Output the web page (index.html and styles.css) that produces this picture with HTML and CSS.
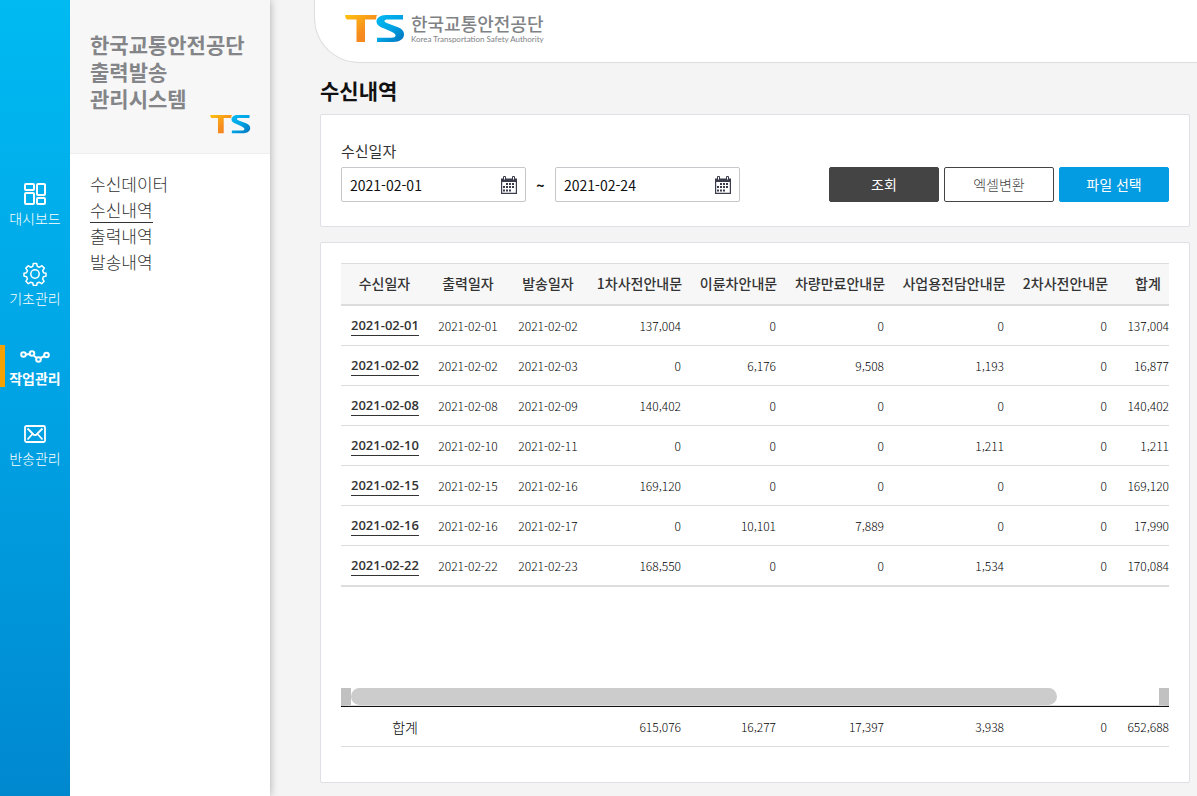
FILE: index.html
```
<!DOCTYPE html>
<html lang="ko">
<head>
    <meta charset="UTF-8">
    <meta name="viewport" content="width=device-width, initial-scale=1.0">
    <title>한국교통안전공단 출력발송 관리시스템</title>
    <link rel="stylesheet" href="styles.css">
</head>
<body>
    <!-- shared symbols -->
    <svg class="defs" width="0" height="0" aria-hidden="true">
        <defs>
            <linearGradient id="tsOrange" x1="0" y1="0" x2="1" y2="1">
                <stop offset="0" stop-color="#ffc20e"/>
                <stop offset="0.6" stop-color="#f68b1f"/>
                <stop offset="1" stop-color="#f58220"/>
            </linearGradient>
            <linearGradient id="tsBlue" x1="0" y1="0" x2="1" y2="1">
                <stop offset="0" stop-color="#00b9f2"/>
                <stop offset="0.5" stop-color="#00a4e4"/>
                <stop offset="1" stop-color="#0072bc"/>
            </linearGradient>
            <symbol id="ts" viewBox="0 0 60 28">
                <path fill="url(#tsOrange)" d="M0 0H32Q31 2 31 4.500H20V27H11.500V4.500H2Q0 3 0 0Z"/>
                <path fill="url(#tsBlue)" d="M58 0H41C35 0 31.500 3 31.500 6.500C31.500 9.500 34 11.500 38 13L46 16.500C49 18 50.500 19.300 50.500 20.500C50.500 22.300 49 22.700 46 22.700H32V27H48C55 27 59 24 59 19.300C59 16 57 14 53 12.300L43 8.500C40.500 7.500 39.500 7 39.500 6C39.500 5 40.500 4.500 43 4.500H58Z"/>
            </symbol>
            <symbol id="calendar" viewBox="0 0 16 18">
                <path fill="#3b3c4b" d="M0 2.500H2V4H5V2.500H11V4H14V2.500H16V18H0ZM1.200 6V16.800H14.800V6Z" fill-rule="evenodd"/>
                <path fill="#fff" stroke="#3b3c4b" d="M2.500 .5H4.500V4H2.500ZM11.500 .5H13.500V4H11.500Z"/>
                <path stroke="#3b3c4b" stroke-width="2" stroke-dasharray="2 1" fill="none" d="M5 8H14M2 11H14M2 14.500H11"/>
            </symbol>
        </defs>
    </svg>

    <div class="layout">
        <nav class="rail">
            <a href="#" class="rail-item">
                <svg width="24" height="24" viewBox="0 0 24 24" fill="none" stroke="#fff" stroke-width="2">
                    <rect x="2" y="2" width="9" height="6" rx="1"/>
                    <rect x="2" y="11" width="9" height="11" rx="1"/>
                    <rect x="14" y="2" width="8" height="11" rx="1"/>
                    <rect x="14" y="16" width="8" height="6" rx="1"/>
                </svg>
                대시보드
            </a>
            <a href="#" class="rail-item">
                <svg width="24" height="24" viewBox="0 0 24 24" fill="none" stroke="#fff" stroke-width="1.500" stroke-linejoin="round">
                    <circle cx="12" cy="12" r="4.200"/>
                    <path d="M10.300 1.500h3.400l.6 2.900 2 .9 2.600-1.600 2.400 2.400-1.600 2.600.9 2 2.400.6v2.800l-2.600.7-.8 2 1.500 2.500-2.400 2.400-2.500-1.500-2 .8-.6 2.500h-3.200l-.6-2.500-2-.8-2.500 1.500-2.400-2.400 1.500-2.500-.8-2-2.600-.7v-2.800l2.500-.6.9-2-1.600-2.600 2.400-2.400 2.600 1.600 2-.9Z"/>
                </svg>
                기초관리
            </a>
            <a href="#" class="rail-item active">
                <svg width="32" height="24" viewBox="0 0 32 24" fill="none" stroke="#fff" stroke-width="2">
                    <path d="M7 12.500L11 12M15 14L18 16M21.500 16L25.500 14"/>
                    <circle cx="4.500" cy="12.500" r="2.300"/>
                    <circle cx="13" cy="11.500" r="2.300"/>
                    <circle cx="19.500" cy="17.500" r="2.300"/>
                    <circle cx="27.500" cy="13" r="2.300"/>
                </svg>
                작업관리
            </a>
            <a href="#" class="rail-item">
                <svg width="24" height="24" viewBox="0 0 24 24" fill="none" stroke="#fff" stroke-width="1.800">
                    <rect x="2" y="4" width="20" height="16" rx="1.500"/>
                    <path d="M4.500 6.500L10.500 12.500Q12 13.800 13.500 12.500L19.500 6.500M4.500 17.500L9.500 12M19.500 17.500L14.500 12"/>
                </svg>
                반송관리
            </a>
        </nav>

        <aside class="side">
            <div class="side-head">
                <h2>한국교통안전공단<br>출력발송<br>관리시스템</h2>
                <svg class="side-logo" width="41" height="19"><use href="#ts"/></svg>
            </div>
            <ul class="side-menu">
                <li><a href="#">수신데이터</a></li>
                <li><a href="#" class="on">수신내역</a></li>
                <li><a href="#">출력내역</a></li>
                <li><a href="#">발송내역</a></li>
            </ul>
        </aside>

        <main class="content">
            <header class="topbar">
                <svg width="60" height="28"><use href="#ts"/></svg>
                <div class="brand">
                    <strong>한국교통안전공단</strong>
                    <span>Korea Transportation Safety Authority</span>
                </div>
            </header>

            <div class="page">
                <h1>수신내역</h1>

                <form class="card search">
                    <label for="dateFrom">수신일자</label>
                    <div class="search-row">
                        <div class="date">
                            <input type="text" id="dateFrom" value="2021-02-01">
                            <svg width="16" height="18"><use href="#calendar"/></svg>
                        </div>
                        <span class="tilde">~</span>
                        <div class="date">
                            <input type="text" id="dateTo" value="2021-02-24" aria-label="수신일자 종료">
                            <svg width="16" height="18"><use href="#calendar"/></svg>
                        </div>
                        <div class="buttons">
                            <button type="button" class="btn dark">조회</button>
                            <button type="button" class="btn line">엑셀변환</button>
                            <button type="button" class="btn blue">파일 선택</button>
                        </div>
                    </div>
                </form>

                <section class="card result">
                    <div class="grid-body">
                        <table>
                            <colgroup>
                                <col class="c1"><col class="c2"><col class="c2"><col class="c3"><col class="c4"><col class="c5"><col class="c6"><col class="c3"><col class="c7">
                            </colgroup>
                            <thead>
                                <tr><th>수신일자</th><th>출력일자</th><th>발송일자</th><th>1차사전안내문</th><th>이륜차안내문</th><th>차량만료안내문</th><th>사업용전담안내문</th><th>2차사전안내문</th><th>합계</th></tr>
                            </thead>
                            <tbody>
                                <tr><td><a href="#">2021-02-01</a></td><td>2021-02-01</td><td>2021-02-02</td><td>137,004</td><td>0</td><td>0</td><td>0</td><td>0</td><td>137,004</td></tr>
                                <tr><td><a href="#">2021-02-02</a></td><td>2021-02-02</td><td>2021-02-03</td><td>0</td><td>6,176</td><td>9,508</td><td>1,193</td><td>0</td><td>16,877</td></tr>
                                <tr><td><a href="#">2021-02-08</a></td><td>2021-02-08</td><td>2021-02-09</td><td>140,402</td><td>0</td><td>0</td><td>0</td><td>0</td><td>140,402</td></tr>
                                <tr><td><a href="#">2021-02-10</a></td><td>2021-02-10</td><td>2021-02-11</td><td>0</td><td>0</td><td>0</td><td>1,211</td><td>0</td><td>1,211</td></tr>
                                <tr><td><a href="#">2021-02-15</a></td><td>2021-02-15</td><td>2021-02-16</td><td>169,120</td><td>0</td><td>0</td><td>0</td><td>0</td><td>169,120</td></tr>
                                <tr><td><a href="#">2021-02-16</a></td><td>2021-02-16</td><td>2021-02-17</td><td>0</td><td>10,101</td><td>7,889</td><td>0</td><td>0</td><td>17,990</td></tr>
                                <tr><td><a href="#">2021-02-22</a></td><td>2021-02-22</td><td>2021-02-23</td><td>168,550</td><td>0</td><td>0</td><td>1,534</td><td>0</td><td>170,084</td></tr>
                            </tbody>
                        </table>
                    </div>
                    <div class="scrollbar"><div class="thumb"></div></div>
                    <div class="grid-total">
                        <table>
                            <colgroup>
                                <col class="c1"><col class="c2"><col class="c2"><col class="c3"><col class="c4"><col class="c5"><col class="c6"><col class="c3"><col class="c7">
                            </colgroup>
                            <tbody>
                                <tr><td class="label">합계</td><td></td><td></td><td>615,076</td><td>16,277</td><td>17,397</td><td>3,938</td><td>0</td><td>652,688</td></tr>
                            </tbody>
                        </table>
                    </div>
                </section>
            </div>
        </main>
    </div>
</body>
</html>
```

FILE: styles.css
```
* {
    box-sizing: border-box;
}
body {
    margin: 0;
    font-family: "Noto Sans CJK KR", sans-serif;
    font-size: 14px;
    color: #333;
    background-color: #f4f4f4;
}
a {
    color: inherit;
    text-decoration: none;
}
svg {
    display: block;
    flex: none;
}
.defs {
    position: absolute;
}
.layout {
    display: flex;
    min-height: 100vh;
}

/* left icon rail */
.rail {
    flex: none;
    width: 70px;
    padding-top: 182px;
    background: linear-gradient(#00baf2, #00a3e4 50%, #0088cf);
}
.rail-item {
    display: flex;
    flex-direction: column;
    align-items: center;
    height: 42px;
    margin-bottom: 38px;
    font-size: 14px;
    font-weight: 300;
    line-height: 24px;
    color: #fff;
    white-space: nowrap;
}
.rail-item.active {
    font-weight: 700;
    position: relative;
}
.rail-item.active::before {
    content: "";
    position: absolute;
    left: 0;
    top: 3px;
    width: 5px;
    height: 42px;
    background: #f5a200;
}

/* sub menu */
.side {
    flex: none;
    width: 200px;
    background: #fff;
    box-shadow: 0 0 8px rgba(0, 0, 0, 0.3);
    clip-path: inset(0 -12px 0 0);
}
.side-head {
    height: 154px;
    padding: 31px 19px 0 20px;
    background: #f7f7f7;
    border-bottom: 1px solid #eee;
}
.side-head h2 {
    margin: 0 0 3px;
    font-size: 21px;
    font-weight: 700;
    line-height: 27px;
    color: #848588;
    white-space: nowrap;
}
.side-logo {
    margin-left: auto;
}
.side-menu {
    margin: 0;
    padding: 18px 20px;
    list-style: none;
    font-size: 17px;
    font-weight: 300;
    line-height: 24px;
}
.side-menu li {
    height: 26px;
}
.side-menu a {
    display: inline-block;
}
.side-menu .on {
    border-bottom: 1px solid #333;
}

/* content */
.content {
    flex: 1;
    min-width: 0;
}
.topbar {
    display: flex;
    align-items: flex-start;
    gap: 6px;
    height: 63px;
    margin-left: 44px;
    padding: 15px 0 0 30px;
    background: #fff;
    border: 1px solid #dedede;
    border-width: 0 0 1px 1px;
    border-bottom-left-radius: 45px;
}
.brand {
    display: flex;
    flex-direction: column;
    color: #808285;
    white-space: nowrap;
}
.brand strong {
    font-size: 18px;
    font-weight: 500;
    line-height: 16px;
}
.brand span {
    font-family: Lato, sans-serif;
    font-size: 8px;
    line-height: 17px;
}
.page {
    padding: 12px 7px 13px 50px;
}
h1 {
    margin: 0 0 9px;
    font-size: 21px;
    font-weight: 700;
    line-height: 30px;
    color: #111;
}
.card {
    background: #fff;
    border: 1px solid #dfe0e6;
    border-radius: 2px;
    padding: 20px;
}
.search {
    height: 113px;
    padding-top: 24px;
    margin-bottom: 15px;
}
.search label {
    display: block;
    font-size: 15px;
    line-height: 24px;
    margin-bottom: 4px;
}
.search-row {
    display: flex;
    align-items: center;
}
.date {
    display: flex;
    align-items: center;
    width: 185px;
    height: 35px;
    padding: 0 8px;
    border: 1px solid #c6c6cb;
    border-radius: 2px;
}
.date input {
    flex: 1;
    min-width: 0;
    padding: 0;
    border: 0;
    font-family: inherit;
    font-size: 14px;
    color: #111;
    background: none;
}
.tilde {
    width: 29px;
    text-align: center;
    font-weight: 700;
    color: #111;
}
.buttons {
    display: flex;
    gap: 5px;
    margin-left: auto;
}
.btn {
    width: 110px;
    height: 35px;
    padding: 0 0 2px;
    border: 1px solid #444;
    border-radius: 2px;
    font-family: inherit;
    font-size: 14px;
    color: #fff;
}
.btn.dark {
    background: #444;
}
.btn.line {
    background: #fff;
    color: #444;
    font-weight: 300;
}
.btn.blue {
    background: #039be1;
    border-color: #039be1;
}

/* result grid */
.result {
    padding-bottom: 35px;
}
.grid-body {
    height: 425px;
    overflow: hidden;
}
.grid-total {
    overflow: hidden;
}
table {
    width: calc(100% + 10px);
    table-layout: fixed;
    border-collapse: separate;
    border-spacing: 0;
}
.c1 { width: 87px; }
.c2 { width: 80px; }
.c3 { width: 103px; }
.c4 { width: 95px; }
.c5 { width: 108px; }
.c6 { width: 120px; }
.c7 { width: 62px; }
th {
    height: 43px;
    padding: 0 0 2px;
    font-size: 14px;
    font-weight: 500;
    line-height: 20px;
    white-space: nowrap;
    background: #f7f7f7;
    border-top: 1px solid #ddd;
    border-bottom: 2px solid #ddd;
}
td {
    height: 40px;
    padding: 0 10px;
    font-size: 12px;
    font-weight: 300;
    line-height: 18px;
    color: #000;
    text-align: right;
    white-space: nowrap;
    border-bottom: 1px solid #ddd;
}
.grid-body tr:last-child td {
    height: 41px;
    border-bottom-width: 2px;
}
.grid-body td:nth-child(-n+3) {
    text-align: center;
}
td.label {
    font-size: 14px;
}
td a {
    display: inline-block;
    font-family: "Open Sans", sans-serif;
    font-size: 13px;
    font-weight: 600;
    line-height: 19px;
    color: #333;
    border-bottom: 1px solid #333;
}
.scrollbar {
    height: 18px;
    border: solid #c1c1c1;
    border-width: 0 10px;
    border-bottom: 1px solid #ddd;
}
.thumb {
    width: 87.4%;
    height: 17px;
    border-radius: 9px;
    background: #ccc;
}
.grid-total table {
    border-top: 1px solid #111;
}
```
